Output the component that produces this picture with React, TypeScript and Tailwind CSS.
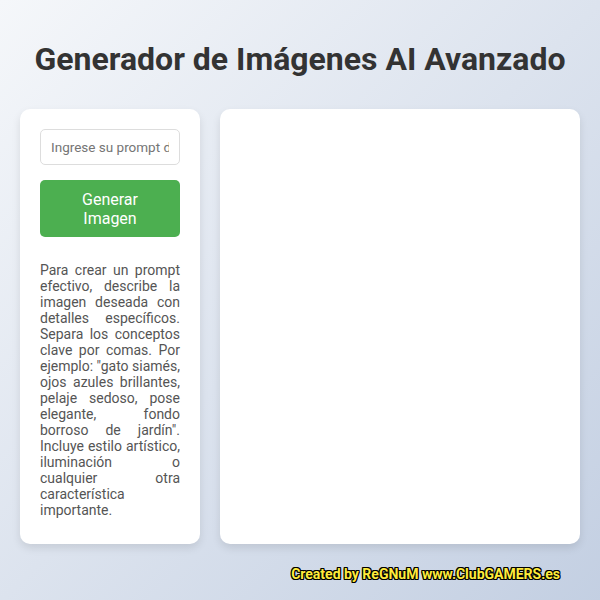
export default function App() {
  return (
    <div
      className="min-h-[600px] w-full flex flex-col bg-[linear-gradient(135deg,#f5f7fa_0%,#c3cfe2_100%)] px-5 pb-5"
      style={{ fontFamily: "Roboto, 'Noto Sans', sans-serif" }}
    >
      <h1 className="mt-[40px] mb-[31px] text-center text-[32px] leading-[38px] font-bold text-[#333]">
        Generador de Imágenes AI Avanzado
      </h1>
      <div className="flex gap-5 h-[435px]">
        <div className="w-[180px] shrink-0 bg-white rounded-[10px] shadow-[0_4px_8px_rgba(0,0,0,0.1)] p-5 flex flex-col">
          <input
            type="text"
            placeholder="Ingrese su prompt detallado aquí"
            className="w-full h-[36px] px-[10px] border border-[#ddd] rounded-[5px] text-[13.5px] text-[#333] placeholder:text-[#757575] outline-none"
          />
          <button className="mt-[15px] w-full h-[57px] bg-[#4caf50] text-white text-[16px] leading-[19px] rounded-[5px] px-5">
            Generar Imagen
          </button>
          <p className="mt-[25px] text-[14px] leading-[16px] text-[#555] text-justify">
            Para crear un prompt efectivo, describe la imagen deseada con detalles específicos. Separa los conceptos clave por comas. Por ejemplo: "gato siamés, ojos azules brillantes, pelaje sedoso, pose elegante, fondo borroso de jardín". Incluye estilo artístico, iluminación o cualquier otra característica importante.
          </p>
        </div>
        <div className="flex-1 bg-white rounded-[10px] shadow-[0_4px_8px_rgba(0,0,0,0.1)]"></div>
      </div>
      <div className="flex justify-end pr-[20px] mt-[20px]">
        <span className="text-[14px] font-bold text-[#ffeb3b] [text-shadow:1px_1px_0_#000,-1px_-1px_0_#000,1px_-1px_0_#000,-1px_1px_0_#000,0_1px_0_#000,1px_0_0_#000,0_-1px_0_#000,-1px_0_0_#000]">
          Created by ReGNuM www.ClubGAMERS.es
        </span>
      </div>
    </div>
  );
}
